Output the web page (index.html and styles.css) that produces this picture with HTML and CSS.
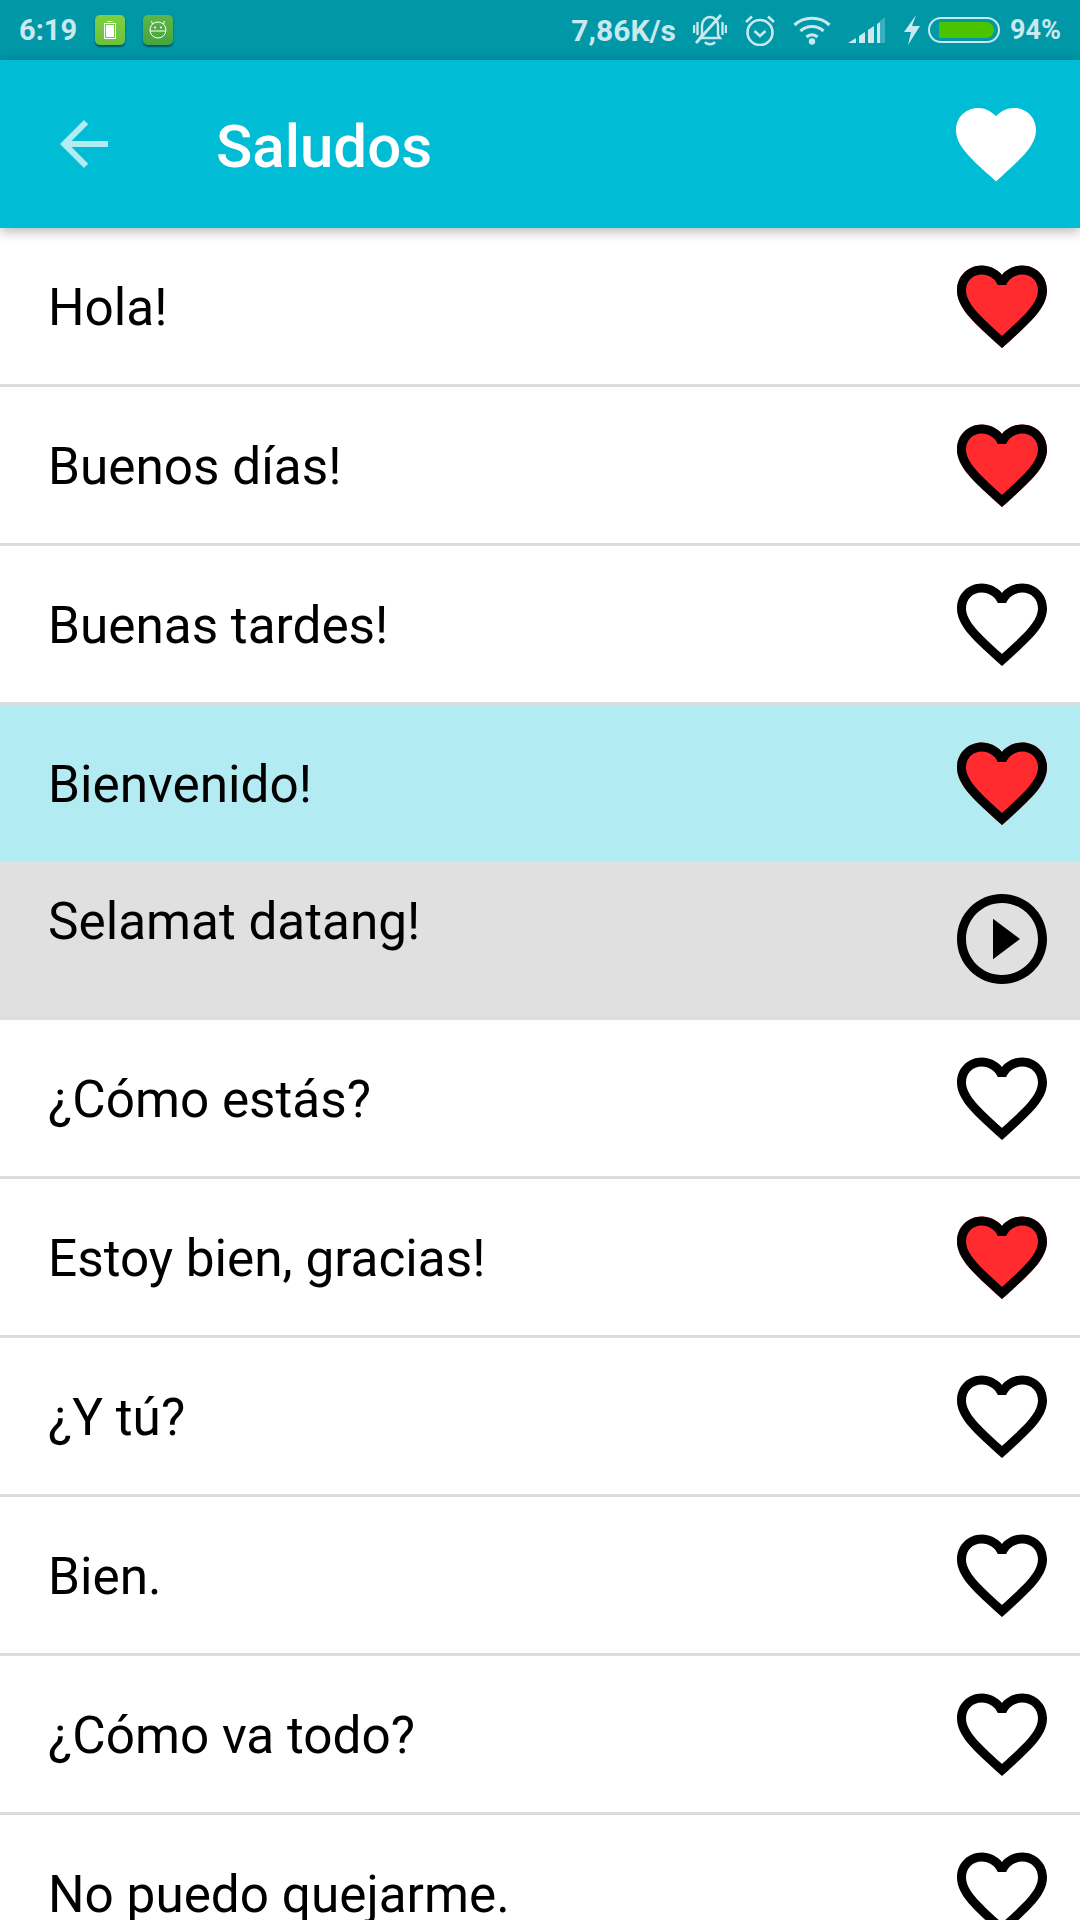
FILE: index.html
```html
<!DOCTYPE html>
<html lang="es">
  <head>
    <meta charset="UTF-8" />
    <meta name="viewport" content="width=device-width, initial-scale=1.0" />
    <title>Saludos</title>
    <link rel="stylesheet" href="styles.css">
  </head>
  <body>
    <svg class="defs" width="0" height="0">
      <defs>
        <path id="heartFill" d="M12 21.35l-1.45-1.32C5.4 15.36 2 12.28 2 8.5 2 5.42 4.42 3 7.5 3c1.74 0 3.41.81 4.5 2.09C13.09 3.81 14.76 3 16.5 3 19.58 3 22 5.42 22 8.5c0 3.78-3.4 6.86-8.55 11.54L12 21.35z" />
        <path id="heartLine" d="M16.5 3c-1.74 0-3.41.81-4.5 2.09C10.91 3.81 9.24 3 7.5 3 4.42 3 2 5.42 2 8.5c0 3.78 3.4 6.86 8.55 11.54L12 21.35l1.45-1.32C18.6 15.36 22 12.28 22 8.5 22 5.42 19.58 3 16.5 3zm-4.4 15.55l-.1.1-.1-.1C7.14 14.24 4 11.39 4 8.5 4 6.5 5.5 5 7.5 5c1.54 0 3.04.99 3.57 2.36h1.87C13.46 5.99 14.96 5 16.5 5c2 0 3.5 1.5 3.5 3.5 0 2.89-3.14 5.74-7.9 10.05z" />
      </defs>
    </svg>

    <div class="status-bar">
      <span class="status-time">6:19</span>
      <div class="notif notif-battery">
        <svg width="30" height="30" viewBox="0 0 30 30">
          <path d="M12.500 6.500h5" stroke="#fff" stroke-width="1" />
          <rect x="9.500" y="8.500" width="11" height="15" fill="none" stroke="#fff" />
          <rect x="11" y="10" width="8" height="12" fill="#fff" />
        </svg>
      </div>
      <div class="notif notif-android">
        <svg width="30" height="30" viewBox="0 0 30 30">
          <g fill="none" stroke="#fff" stroke-width="1">
            <circle cx="15" cy="15" r="8" />
            <path d="M7 16h16M9.500 9l-1-3M20.500 9l1-3" />
          </g>
          <circle cx="12" cy="12.500" r="1" fill="#fff" />
          <circle cx="18" cy="12.500" r="1" fill="#fff" />
        </svg>
      </div>

      <span class="status-speed">7,86K/s</span>
      <svg class="sys-icon" width="34" height="32" viewBox="0 0 34 32">
        <g fill="none" stroke="#c9e9ee" stroke-width="2.4">
          <path d="M9 21V12c0-5 3.500-9 8-9s8 4 8 9v9l2 3H7z" />
          <path d="M12 28c2 3 8 3 10 0" />
          <path d="M1 11v8M4.500 8v13M33 11v8M29.500 8v13" />
          <path d="M3 29L28 1" stroke-width="2.800" />
        </g>
      </svg>
      <svg class="sys-icon" width="32" height="32" viewBox="0 0 32 32">
        <g fill="none" stroke="#c9e9ee" stroke-width="2.600">
          <circle cx="16" cy="18.500" r="12.500" />
          <path d="M10.500 17l5.500 5 5.500-5" />
          <path d="M2 8l6-5.500M30 8l-6-5.500" />
        </g>
      </svg>
      <svg class="sys-icon" width="38" height="30" viewBox="0 0 38 30">
        <g fill="none" stroke="#c9e9ee" stroke-width="3.200">
          <path d="M1.500 10C11 1 27 1 36.500 10" />
          <path d="M7.500 16c6.500-6 16.500-6 23 0" />
          <path d="M13.500 22c3-3 8-3 11 0" />
        </g>
        <circle cx="19" cy="26.500" r="3.200" fill="#c9e9ee" />
      </svg>
      <svg class="sys-icon" width="37" height="28" viewBox="0 0 37 28">
        <path d="M0 27L8 22V27z" fill="#c9e9ee" />
        <path d="M11 20L17 16V27H11z" fill="#c9e9ee" />
        <path d="M20 14L26 10V27H20z" fill="#c9e9ee" />
        <path d="M29 8L32 6V27H29z" fill="#c9e9ee" />
        <path d="M32 5L37 1V27H32z" fill="#c9e9ee" opacity="0.3" />
      </svg>
      <svg class="sys-icon sys-bolt" width="16" height="30" viewBox="0 0 16 30">
        <path d="M12 0L0 17H7L4 30L16 11H8z" fill="#c9e9ee" />
      </svg>
      <div class="battery"><div class="battery-level"></div></div>
      <span class="status-percent">94%</span>
    </div>

    <header class="toolbar">
      <svg class="back-icon" width="72" height="72" viewBox="0 0 24 24">
        <path d="M20 11H7.830l5.590-5.590L12 4l-8 8 8 8 1.410-1.410L7.830 13H20v-2z" />
      </svg>
      <h1 class="toolbar-title">Saludos</h1>
      <svg class="toolbar-heart" width="96" height="96" viewBox="0 0 24 24"><use href="#heartFill" /></svg>
    </header>

    <ul class="phrases">
      <li class="phrase">
        <span class="phrase-text">Hola!</span>
        <svg class="heart" viewBox="0 0 24 24"><use class="heart-red" href="#heartFill" /><use href="#heartLine" /></svg>
      </li>
      <li class="phrase">
        <span class="phrase-text">Buenos días!</span>
        <svg class="heart" viewBox="0 0 24 24"><use class="heart-red" href="#heartFill" /><use href="#heartLine" /></svg>
      </li>
      <li class="phrase">
        <span class="phrase-text">Buenas tardes!</span>
        <svg class="heart" viewBox="0 0 24 24"><use href="#heartLine" /></svg>
      </li>
      <li class="phrase phrase-open">
        <span class="phrase-text">Bienvenido!</span>
        <svg class="heart" viewBox="0 0 24 24"><use class="heart-red" href="#heartFill" /><use href="#heartLine" /></svg>
      </li>
      <li class="phrase phrase-translation">
        <span class="phrase-text">Selamat datang!</span>
        <svg class="heart" viewBox="0 0 24 24">
          <path d="M10 16.500l6-4.500-6-4.500v9zM12 2C6.480 2 2 6.480 2 12s4.480 10 10 10 10-4.480 10-10S17.520 2 12 2zm0 18c-4.410 0-8-3.590-8-8s3.590-8 8-8 8 3.590 8 8-3.590 8-8 8z" />
        </svg>
      </li>
      <li class="phrase">
        <span class="phrase-text">¿Cómo estás?</span>
        <svg class="heart" viewBox="0 0 24 24"><use href="#heartLine" /></svg>
      </li>
      <li class="phrase">
        <span class="phrase-text">Estoy bien, gracias!</span>
        <svg class="heart" viewBox="0 0 24 24"><use class="heart-red" href="#heartFill" /><use href="#heartLine" /></svg>
      </li>
      <li class="phrase">
        <span class="phrase-text">¿Y tú?</span>
        <svg class="heart" viewBox="0 0 24 24"><use href="#heartLine" /></svg>
      </li>
      <li class="phrase">
        <span class="phrase-text">Bien.</span>
        <svg class="heart" viewBox="0 0 24 24"><use href="#heartLine" /></svg>
      </li>
      <li class="phrase">
        <span class="phrase-text">¿Cómo va todo?</span>
        <svg class="heart" viewBox="0 0 24 24"><use href="#heartLine" /></svg>
      </li>
      <li class="phrase">
        <span class="phrase-text">No puedo quejarme.</span>
        <svg class="heart" viewBox="0 0 24 24"><use href="#heartLine" /></svg>
      </li>
    </ul>
  </body>
</html>
```

FILE: styles.css
```css
* {
  margin: 0;
  padding: 0;
  box-sizing: border-box;
}

html,
body {
  height: 1920px;
  overflow: hidden;
}

body {
  font-family: 'Roboto', sans-serif;
  background-color: #fff;
  color: #000;
}

.defs {
  display: block;
  height: 0;
}

.status-bar {
  display: flex;
  align-items: center;
  height: 60px;
  padding: 0 19px;
  background-color: #0097a7;
  color: #c9e9ee;
  font-weight: 700;
  font-size: 29px;
}

.status-time {
  width: 76px;
}

.notif {
  width: 30px;
  height: 30px;
  margin-right: 18px;
  border-radius: 5px;
  box-shadow: 0 2px 2px rgba(0, 60, 70, 0.7);
}

.notif svg {
  display: block;
}

.notif-battery {
  background: linear-gradient(#7dd040, #6cc13c);
}

.notif-android {
  background: linear-gradient(#5db647, #46a53e);
}

.status-speed {
  margin-left: auto;
  font-size: 30px;
}

.sys-icon {
  display: block;
  margin-left: 17px;
}

.sys-bolt {
  margin-left: 19px;
}

.battery {
  width: 72px;
  height: 26px;
  margin-left: 8px;
  padding: 3px 4px 3px 9px;
  border: 2px solid #c9e9ee;
  border-radius: 13px;
}

.battery-level {
  height: 100%;
  background-color: #4bc400;
  border-radius: 0 8px 8px 0;
}

.status-percent {
  width: 51px;
  margin-left: 10px;
  font-size: 27px;
}

.toolbar {
  position: relative;
  display: flex;
  align-items: center;
  height: 168px;
  padding: 0 36px 0 48px;
  background-color: #00bcd4;
  box-shadow: 0 3px 12px rgba(0, 0, 0, 0.3);
}

.back-icon {
  fill: #b2ebf2;
}

.toolbar-title {
  margin-left: 96px;
  padding-top: 4px;
  color: #fff;
  font-size: 60px;
  font-weight: 500;
}

.toolbar-heart {
  margin-left: auto;
  fill: #fff;
}

.phrases {
  list-style: none;
}

.phrase {
  display: flex;
  align-items: center;
  justify-content: space-between;
  height: 159px;
  padding: 0 24px 0 48px;
  border-bottom: 3px solid #dcdcdc;
}

.phrase-text {
  padding-top: 4px;
  font-size: 51.3px;
  line-height: 64px;
}

.heart {
  width: 108px;
  height: 108px;
  fill: #000;
}

.heart-red {
  fill: #ff2b2e;
}

.phrase-open {
  height: 156px;
  background-color: #b2ebf2;
  border-bottom: none;
}

.phrase-translation {
  background-color: #e0e0e0;
}

.phrase-translation .phrase-text {
  align-self: flex-start;
  margin-top: 25px;
}
```
